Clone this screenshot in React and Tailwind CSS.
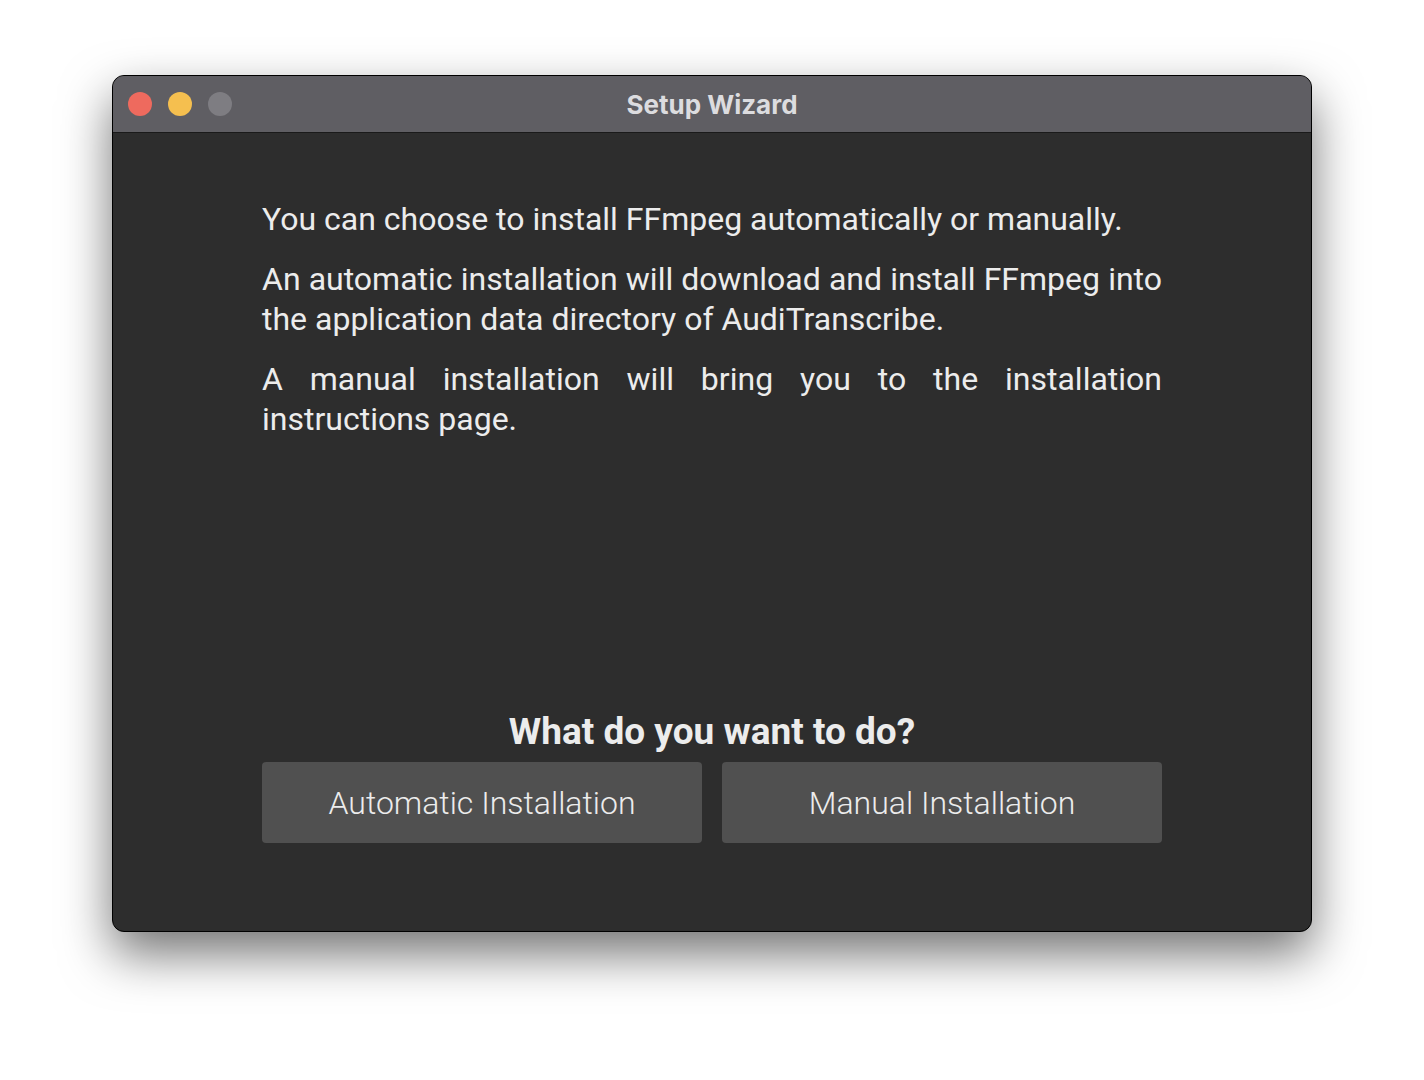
import React from 'react';

export default function App() {
  return (
    <div className="w-[1424px] h-[1080px] bg-white flex items-start justify-center pt-[75px]">
      {/* Window */}
      <div className="w-[1200px] h-[857px] rounded-[12px] overflow-hidden border border-black bg-[#2d2d2d] shadow-[0_22px_50px_rgba(0,0,0,0.55)] flex flex-col">
        {/* Title bar */}
        <div className="relative h-[57px] shrink-0 bg-[#5f5e63] border-b border-[#1a1a1a] flex items-center justify-center">
          <div className="absolute left-[15px] top-0 h-full flex items-center gap-[16px]">
            <span className="w-[24px] h-[24px] rounded-full bg-[#ee6a5e]" />
            <span className="w-[24px] h-[24px] rounded-full bg-[#f5bf4f]" />
            <span className="w-[24px] h-[24px] rounded-full bg-[#7e7d82]" />
          </div>
          <span className="text-[26px] font-bold text-[#dcdcdf] font-['Inter',sans-serif]">Setup Wizard</span>
        </div>

        {/* Content */}
        <div className="flex-1 flex flex-col px-[149px] pt-[66px] pb-[88px] font-['Roboto',sans-serif] text-[#ececec]">
          <div className="flex flex-col gap-[20px] text-[32px] leading-[40px] text-justify">
            <p>You can choose to install FFmpeg automatically or manually.</p>
            <p>An automatic installation will download and install FFmpeg into the application data directory of AudiTranscribe.</p>
            <p>A manual installation will bring you to the installation instructions page.</p>
          </div>

          <div className="mt-auto flex flex-col items-center">
            <h2 className="text-[37px] font-bold leading-[40px] mb-[10px]">What do you want to do?</h2>
            <div className="w-full grid grid-cols-2 gap-[20px]">
              <button className="h-[81px] rounded-[4px] bg-[#505050] text-[32px] font-light text-[#ececec]">Automatic Installation</button>
              <button className="h-[81px] rounded-[4px] bg-[#505050] text-[32px] font-light text-[#ececec]">Manual Installation</button>
            </div>
          </div>
        </div>
      </div>
    </div>
  );
}
